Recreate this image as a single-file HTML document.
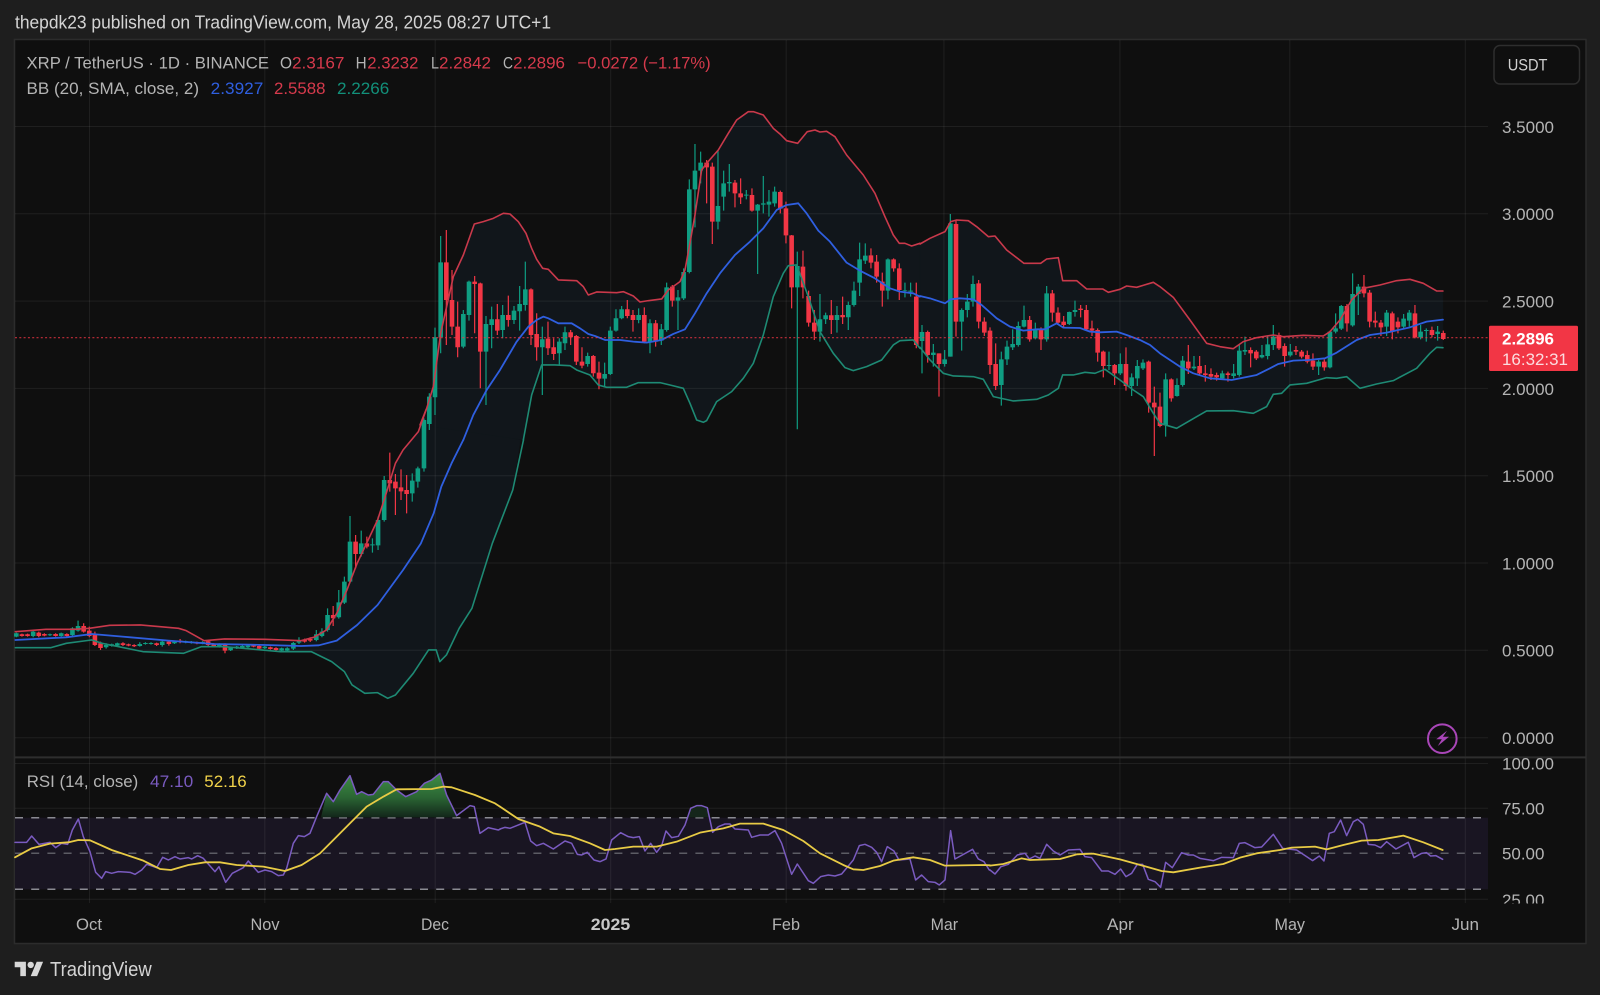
<!DOCTYPE html>
<html lang="en"><head><meta charset="utf-8"><title>XRP / TetherUS chart</title>
<style>
html,body{margin:0;padding:0;background:#1e1e1e;width:1600px;height:995px;overflow:hidden}
svg{display:block;filter:blur(.3px)}
text{font-family:"Liberation Sans",sans-serif;font-size:17px}
.w path,.b path,.ln polyline{vector-effect:non-scaling-stroke;fill:none}
.ln polyline{stroke-linejoin:round;stroke-linecap:round}
.w path{stroke-width:1.2}
.b path{stroke-width:4.6}
.gc{stroke:#0f9d82}.rc{stroke:#f23645}
.ax{fill:#b4b4b4}
.u{stroke:#c9394b;stroke-width:1.6}.m{stroke:#2f5fe0;stroke-width:1.8}.d{stroke:#1e8a74;stroke-width:1.6}
.p{stroke:#7a5bc0;stroke-width:1.5}.y{stroke:#e8cb45;stroke-width:1.8}
.f{fill:#11161b;stroke:#11161b;stroke-width:1}
</style></head><body>
<svg width="1600" height="995" viewBox="0 0 1600 995" xmlns="http://www.w3.org/2000/svg">
<defs>
<linearGradient id="ob" gradientUnits="userSpaceOnUse" x1="0" y1="25" x2="0" y2="157"><stop offset="0" stop-color="#3f8f45"/><stop offset=".55" stop-color="#2a6533"/><stop offset="1" stop-color="#12261a"/></linearGradient>
<clipPath id="rc"><rect x="1488" y="758" width="98" height="145.5"/></clipPath>
</defs>
<rect width="1600" height="995" fill="#1e1e1e"/>
<rect x="14.5" y="39.5" width="1571.5" height="904" fill="#0f0f0f" stroke="#2c2c2c" stroke-width="1.5"/>

<!-- BB fill -->
<g>
<polygon class="f" transform="translate(0 400) scale(.5102 .3333)" points="30,695 90,688 145,688 175,685 215,676 275,675 350,685 365,692 400,722 440,717 520,718 590,722 615,712 640,690 660,640 680,570 700,490 740,360 755,290 775,190 790,150 820,95 835,30 1020,120 1005,270 965,430 925,625 900,685 875,765 862,785 855,750 840,750 810,820 775,885 760,895 740,878 715,880 690,855 675,815 650,785 610,755 550,755 440,740 395,740 360,760 280,755 200,730 180,720 170,722 130,730 100,743 30,743"/>
<polygon class="f" transform="translate(420 100) scale(.3333)" points="0,975 20,925 40,860 62,700 100,530 130,465 163,372 190,365 220,355 250,340 270,342 295,365 318,400 335,445 350,478 368,505 385,508 415,540 470,542 490,560 505,585 530,576 590,578 610,575 640,588 660,606 685,602 725,597 745,570 780,545 795,510 808,440 825,345 845,210 860,190 895,150 925,100 950,60 985,35 1000,35 1030,45 1060,85 1080,102 1100,122 1133,130 1162,95 1185,90 1200,96 1220,94 1245,110 1280,165 1330,225 1365,280 1395,350 1420,405 1438,430 1455,430 1475,438 1500,430 1500,745 1480,720 1440,722 1420,735 1385,780 1340,800 1300,812 1275,803 1240,760 1200,695 1165,590 1130,495 1105,497 1090,520 1060,590 1030,705 1000,790 970,835 935,875 890,905 860,962 850,967 830,960 810,910 790,865 750,855 720,848 655,848 620,862 560,862 535,855 510,825 470,810 450,797 405,795 365,795 335,885 310,1020"/>
<polygon class="f" transform="translate(920 210) scale(.3333)" points="0,102 30,85 75,65 92,35 110,30 145,32 170,50 205,80 225,78 260,120 312,160 362,160 380,147 415,143 428,212 470,212 500,237 548,237 565,247 600,238 620,228 650,232 700,217 720,230 760,262 810,330 860,400 900,410 940,416 970,395 1010,383 1040,378 1060,375 1090,380 1150,376 1210,378 1230,365 1260,330 1295,270 1330,235 1380,225 1430,212 1470,208 1510,220 1550,243 1569,243 1569,413 1550,412 1530,430 1490,475 1420,512 1370,522 1320,535 1280,500 1250,505 1220,503 1160,520 1110,525 1085,550 1060,553 1040,590 1000,610 940,602 860,603 830,620 770,655 720,640 700,610 670,560 640,540 600,510 555,478 525,490 495,487 460,495 428,495 415,535 385,555 350,568 280,573 220,560 190,508 160,500 100,498 70,490 30,450 0,412"/>
</g>

<!-- RSI band -->
<rect x="15" y="817.7" width="1473" height="71.6" fill="#191522"/>

<!-- grid -->
<g stroke="#ffffff" stroke-opacity=".07" stroke-width="1">
<path d="M15 126.5H1488M15 213.8H1488M15 301.1H1488M15 388.4H1488M15 475.7H1488M15 563H1488M15 650.3H1488M15 737.7H1488M15 763.5H1488M15 808.3H1488M15 899.3H1488"/>
<path d="M89.5 40V903M264.8 40V903M435.2 40V903M610.7 40V903M786.2 40V903M943.9 40V903M1119.9 40V903M1289.8 40V903M1465.3 40V903"/>
</g>

<!-- candles Sep-Dec -->
<g transform="translate(0 400) scale(.5102 .3333)">
<g class="w">
<path class="gc" d="M32 698V712M65 692V712M98 701V708M120 698V710M142 682V710M153 662V695M208 730V746M219 731V740M230 728V739M274 727V740M285 727V734M296 727V734M318 722V740M342 723V732M364 722V730M375 723V731M397 724V733M430 730V743M452 740V753M464 738V747M475 736V745M486 735V744M519 738V747M552 743V754M563 742V754M575 726V750M586 712V732M620 690V724M631 685V712M642 625V695M664 570V656M675 530V612M686 348V550M708 392V470M730 415V458M741 350V450M753 228V365M808 220V305M819 200V263M831 55V215"/>
<path class="rc" d="M43 701V710M54 701V710M76 695V712M87 700V709M109 700V710M131 700V710M164 670V698M175 680V712M186 695V738M197 725V750M241 727V738M252 731V739M263 733V741M307 728V738M331 722V737M353 717V730M386 725V733M408 720V740M419 730V742M441 730V760M497 734V742M508 735V750M530 740V749M541 742V752M597 716V728M608 712V726M653 618V678M697 405V505M719 410V445M764 158V275M775 222V345M786 208V300M797 225V340"/>
</g>
<g class="b">
<path class="gc" d="M32 700V710M65 695V708M98 703V706M120 700V708M142 685V705M153 678V692M208 735V742M219 733V738M230 730V737M274 732V738M285 729V732M296 729V732M318 725V735M342 725V730M364 724V728M375 725V729M397 726V731M430 733V740M452 742V751M464 740V745M475 738V743M486 737V742M519 740V745M552 745V752M563 745V752M575 729V746M586 722V728M620 703V720M631 695V708M642 645V690M664 607V652M675 545V608M686 425V545M708 430V462M730 433V436M741 360V436M753 240V360M808 242V280M819 205V245M831 60V205"/>
<path class="rc" d="M43 703V708M54 703V708M76 698V708M87 702V707M109 702V708M131 702V708M164 678V695M175 692V708M186 705V735M197 730V744M241 730V735M252 733V737M263 735V739M307 730V735M331 725V732M353 722V726M386 727V731M408 724V735M419 733V738M441 735V752M497 736V740M508 738V746M530 742V747M541 744V750M597 720V725M608 717V722M653 645V655M697 425V462M719 430V440M764 240V250M775 245V265M786 262V274M797 270V282"/>
</g>
</g>

<!-- candles Dec-Feb -->
<g transform="translate(420 100) scale(.3333)">
<g class="w">
<path class="gc" d="M28 880V990M45 683V945M62 408V760M130 630V745M147 542V662M198 648V915M215 620V745M248 615V715M282 618V672M299 558V692M316 485V632M367 680V885M418 715V795M435 680V750M503 758V800M554 788V860M571 680V825M588 628V695M605 618V658M656 625V670M690 658V760M724 672V735M740 548V695M774 570V690M791 505V600M808 238V520M825 132V382M842 155V250M894 152V388M911 212V332M928 192V275M979 270V298M1013 312V522M1030 228V340M1047 270V350M1064 260V320M1132 455V988M1200 582V725M1217 638V672M1251 618V698M1285 605V690M1302 545V620M1319 428V588M1336 430V492M1404 475V598M1455 548V592M1472 548V590"/>
<path class="rc" d="M79 390V735M96 510V705M113 605V772M164 528V700M181 548V865M232 612V705M265 587V680M333 565V735M350 640V782M384 665V765M401 715V780M452 690V735M469 705V795M486 742V805M520 765V830M537 785V868M622 600V655M639 630V695M673 622V730M707 660V740M757 555V620M860 180V310M877 188V432M945 240V322M962 235V312M996 265V335M1081 272V340M1098 305V430M1115 405V625M1149 452V595M1166 572V680M1183 630V720M1234 600V702M1268 590V672M1353 445V505M1370 465V548M1387 518V620M1421 475V515M1438 490V600M1489 548V745"/>
</g>
<g class="b">
<path class="gc" d="M28 890V972M45 712V892M62 487V712M130 642V740M147 545V645M198 672V755M215 658V675M248 645V690M282 632V660M299 612V634M316 568V615M367 718V742M418 725V760M435 697V730M503 768V792M554 822V836M571 692V822M588 655V692M605 628V655M656 645V660M690 670V725M724 688V722M740 562V690M774 592V602M791 516V595M808 268V516M825 212V268M842 188V212M894 318V365M911 250V290M928 246V250M979 284V287M1013 314V332M1030 310V314M1047 305V314M1064 275V310M1132 498V562M1200 658V695M1217 646V658M1251 645V660M1285 615V652M1302 572V615M1319 478V548M1336 467V482M1404 478V572M1455 570V572M1472 572V575"/>
<path class="rc" d="M79 487V600M96 600V680M113 680V742M164 545V552M181 550V755M232 658V692M265 645V660M333 568V705M350 702V742M384 716V745M401 742V762M452 697V712M469 708V785M486 785V797M520 768V820M537 818V836M622 628V648M639 645V660M673 645V725M707 670V725M757 560V602M860 188V202M877 200V365M945 248V280M962 280V292M996 285V332M1081 276V326M1098 325V406M1115 406V562M1149 500V562M1166 588V668M1183 668V695M1234 646V660M1268 645V652M1353 466V488M1370 485V530M1387 545V572M1421 478V505M1438 505V570M1489 590V735"/>
</g>
</g>

<!-- candles Feb-May -->
<g transform="translate(920 210) scale(.3333)">
<g class="w">
<path class="gc" d="M6 345V490M40 402V470M74 420V470M91 12V440M125 295V422M142 252V322M159 197V290M244 425V587M261 392V465M278 358V420M295 335V410M312 287V352M346 338V388M380 228V395M448 305V345M465 272V320M567 425V480M601 430V495M635 490V558M652 450V528M669 448V480M737 490V680M771 505V560M788 438V530M822 438V480M907 482V510M941 462V505M958 405V500M975 380V435M1026 405V445M1043 378V448M1060 345V420M1111 402V440M1196 450V495M1230 362V475M1247 310V370M1264 285V360M1298 190V350M1315 222V315M1400 300V378M1451 312V355M1468 300V350M1502 345V388M1519 355V395M1553 348V392"/>
<path class="rc" d="M23 362V458M57 430V560M108 30V380M176 210V355M193 322V378M210 352V492M227 400V540M329 318V395M363 352V420M397 240V335M414 292V345M431 318V352M482 285V322M499 285V362M516 332V378M533 355V455M550 422V502M584 462V525M618 412V542M686 452V608M703 530V738M720 548V652M754 505V575M805 405V492M839 438V495M856 465V515M873 475V510M890 488V512M924 485V515M992 412V472M1009 420V450M1077 368V420M1094 400V470M1128 408V435M1145 420V445M1162 422V460M1179 430V480M1213 448V482M1281 282V365M1332 195V262M1349 240V352M1366 305V352M1383 330V378M1417 305V388M1434 322V370M1485 285V385M1536 350V382M1570 362V390"/>
</g>
<g class="b">
<path class="gc" d="M6 366V393M40 428V435M74 448V462M91 40V440M125 300V335M142 275V300M159 222V275M244 448V525M261 410V448M278 402V412M295 348V405M312 330V350M346 358V385M380 250V388M448 306V342M465 300V306M567 465V468M601 462V490M635 502V528M652 468V505M669 458V475M737 508V645M771 525V558M788 452V525M822 470V475M907 490V505M941 490V498M958 422V495M975 420V425M1026 435V442M1043 403V438M1060 380V405M1111 425V436M1196 455V470M1230 365V472M1247 355V365M1264 288V356M1298 252V346M1315 230V252M1400 308V350M1451 326V350M1468 308V332M1502 365V382M1519 360V363M1553 365V372"/>
<path class="rc" d="M23 366V435M57 430V462M108 42V335M176 220V335M193 335V368M210 362V465M227 462V528M329 330V388M363 358V388M397 250V308M414 308V338M431 335V345M482 296V300M499 300V358M516 355V362M533 360V428M550 425V468M584 465V490M618 462V528M686 455V578M703 578V592M720 590V648M754 508V565M805 455V475M839 468V490M856 490V495M873 492V500M890 495V502M924 490V495M992 420V430M1009 425V445M1077 375V415M1094 408V438M1128 420V425M1145 425V440M1162 435V455M1179 452V470M1213 455V472M1281 288V340M1332 230V250M1349 248V335M1366 332V338M1383 338V352M1417 310V365M1434 335V352M1485 310V382M1536 360V375M1570 369V387"/>
</g>
</g>

<!-- BB lines -->
<g class="ln" transform="translate(0 400) scale(.5102 .3333)">
<polyline class="u" points="30,695 90,688 145,688 175,685 215,676 275,675 350,685 365,692 400,722 440,717 520,718 590,722 615,712 640,690 660,640 680,570 700,490 740,360 755,290 775,190 790,150 820,95 835,30"/>
<polyline class="m" points="30,720 130,712 180,702 240,710 330,722 420,732 520,735 590,738 625,736 660,722 700,675 740,615 790,510 825,430 850,340 865,260 885,190 908,120"/>
<polyline class="d" points="30,743 100,743 130,730 170,722 180,720 200,730 280,755 360,760 395,740 440,740 550,755 610,755 650,785 675,815 690,855 715,880 740,878 760,895 775,885 810,820 840,750 855,750 862,785 875,765 900,685 925,625 965,430 1005,270 1026,120"/>
</g>
<g class="ln" transform="translate(420 100) scale(.3333)">
<polyline class="u" points="0,975 20,925 40,860 62,700 100,530 130,465 163,372 190,365 220,355 250,340 270,342 295,365 318,400 335,445 350,478 368,505 385,508 415,540 470,542 490,560 505,585 530,576 590,578 610,575 640,588 660,606 685,602 725,597 745,570 780,545 795,510 808,440 825,345 845,210 860,190 895,150 925,100 950,60 985,35 1000,35 1030,45 1060,85 1080,102 1100,122 1133,130 1162,95 1185,90 1200,96 1220,94 1245,110 1280,165 1330,225 1365,280 1395,350 1420,405 1438,430 1455,430 1475,438 1500,430"/>
<polyline class="m" points="130,1020 160,945 200,870 240,810 290,725 325,680 350,660 370,650 385,655 415,670 455,670 480,685 505,702 525,708 555,720 600,720 640,725 680,728 725,720 760,702 795,688 825,640 860,580 900,520 945,465 990,425 1030,385 1070,330 1100,315 1135,310 1160,340 1195,392 1230,425 1280,488 1320,512 1365,535 1410,565 1440,575 1480,580 1500,590"/>
<polyline class="d" points="310,1020 335,885 365,795 405,795 450,797 470,810 510,825 535,855 560,862 620,862 655,848 720,848 750,855 790,865 810,910 830,960 850,967 860,962 890,905 935,875 970,835 1000,790 1030,705 1060,590 1090,520 1105,497 1130,495 1165,590 1200,695 1240,760 1275,803 1300,812 1340,800 1385,780 1420,735 1440,722 1480,720 1500,745"/>
</g>
<g class="ln" transform="translate(920 210) scale(.3333)">
<polyline class="u" points="0,102 30,85 75,65 92,35 110,30 145,32 170,50 205,80 225,78 260,120 312,160 362,160 380,147 415,143 428,212 470,212 500,237 548,237 565,247 600,238 620,228 650,232 700,217 720,230 760,262 810,330 860,400 900,410 940,416 970,395 1010,383 1040,378 1060,375 1090,380 1150,376 1210,378 1230,365 1260,330 1295,270 1330,235 1380,225 1430,212 1470,208 1510,220 1550,243 1569,243"/>
<polyline class="m" points="0,258 30,265 75,280 92,268 120,265 160,268 185,285 230,325 270,350 310,362 350,358 375,358 410,340 430,353 480,354 510,365 540,367 590,365 620,375 660,390 690,405 720,430 780,470 820,490 870,505 935,510 1010,495 1050,475 1075,462 1120,452 1165,450 1215,445 1250,428 1310,390 1350,375 1400,368 1470,352 1520,335 1569,329"/>
<polyline class="d" points="0,412 30,450 70,490 100,498 160,500 190,508 220,560 280,573 350,568 385,555 415,535 428,495 460,495 495,487 525,490 555,478 600,510 640,540 670,560 700,610 720,640 770,655 830,620 860,603 940,602 1000,610 1040,590 1060,553 1085,550 1110,525 1160,520 1220,503 1250,505 1280,500 1320,535 1370,522 1420,512 1490,475 1530,430 1550,412 1569,413"/>
</g>

<!-- last price line -->
<path d="M15 337.7H1488" stroke="#f23645" stroke-opacity=".8" stroke-width="1.1" stroke-dasharray="2 2.3" fill="none"/>

<!-- separator -->
<rect x="15" y="756.4" width="1571" height="2" fill="#2e2e2e"/>

<!-- RSI dashes -->
<g fill="none" stroke-width="1.5" stroke-dasharray="8 8.2">
<path d="M15 817.7H1482M15 889.3H1482" stroke="#8a8a92"/>
<path d="M15 853.3H1482" stroke="#5c5c64"/>
</g>

<!-- overbought fill -->
<polygon fill="url(#ob)" transform="translate(15 765) scale(.3333)" points="918,157 935,85 955,110 975,75 1005,32 1025,88 1040,80 1060,90 1075,88 1105,50 1120,50 1145,75 1172,95 1205,80 1228,55 1250,45 1275,25 1295,90 1325,157"/>
<polygon fill="#15261b" transform="translate(500 765) scale(.3333)" points="566,157 572,130 590,122 605,122 622,128 628,157"/>

<!-- RSI lines -->
<g class="ln" transform="translate(15 765) scale(.3333)">
<polyline class="p" points="0,232 35,232 50,213 72,238 105,232 122,248 140,235 158,238 172,195 190,162 205,215 225,260 242,322 260,340 272,320 290,325 310,320 345,322 360,328 380,315 395,298 425,308 443,277 460,285 480,275 495,282 520,278 530,282 548,272 565,280 600,320 612,305 632,352 652,325 685,308 700,288 730,322 750,315 770,320 790,332 805,330 815,310 835,235 850,212 868,215 885,205 905,155 935,85 955,110 975,75 1005,32 1025,88 1040,80 1060,90 1075,88 1105,50 1120,50 1145,75 1172,95 1205,80 1228,55 1250,45 1275,25 1295,90 1325,152 1365,122 1378,125 1395,205 1420,188 1450,195 1455,193"/>
</g>
<g class="ln" transform="translate(500 765) scale(.3333)">
<polyline class="p" points="0,192 15,187 30,190 75,172 92,228 110,242 130,235 160,252 195,228 215,235 232,268 245,270 262,262 282,285 300,290 318,282 335,225 362,203 385,215 400,218 418,215 435,258 452,235 470,262 485,242 498,198 515,218 535,214 555,180 572,130 590,122 605,122 622,128 638,202 655,185 675,177 690,177 705,192 745,195 755,217 780,210 805,210 825,197 845,235 875,328 892,297 925,347 940,355 962,335 985,330 1005,333 1025,327 1060,285 1078,242 1095,238 1115,247 1130,262 1145,290 1162,245 1182,258 1197,285 1230,282 1247,345 1265,330 1285,350 1305,352 1318,360 1335,345 1352,197 1365,282 1418,253 1435,282 1452,290 1468,315 1470,315"/>
</g>
<g class="ln" transform="translate(990 765) scale(.3333)">
<polyline class="p" points="0,315 15,327 33,305 55,298 82,270 105,265 118,282 135,273 150,280 170,238 190,258 210,270 235,255 270,253 285,275 305,278 335,318 355,318 375,328 392,312 408,335 425,325 442,298 458,298 475,343 495,350 512,367 527,292 547,308 575,263 595,270 610,270 630,280 670,287 695,277 730,278 748,235 765,233 795,248 815,246 850,208 878,250 920,255 968,287 988,273 1002,288 1018,205 1033,200 1052,165 1070,212 1090,170 1103,163 1120,178 1135,238 1155,240 1172,248 1190,230 1218,252 1255,232 1272,278 1295,265 1310,263 1322,273 1338,272 1358,283"/>
</g>
<g class="ln" transform="translate(15 765) scale(.3333)">
<polyline class="y" points="0,277 50,250 105,236 160,232 190,225 225,226 290,255 385,287 435,312 468,315 520,300 570,292 615,292 665,300 745,305 810,318 860,300 915,265 960,220 1010,170 1055,125 1105,95 1145,73 1250,72 1285,65 1310,67 1380,90 1440,115 1455,125"/>
</g>
<g class="ln" transform="translate(500 765) scale(.3333)">
<polyline class="y" points="0,125 55,162 120,185 160,205 210,213 270,235 315,255 345,252 400,245 470,245 530,230 600,203 670,190 720,176 790,176 850,195 910,228 960,265 1030,300 1060,313 1090,315 1140,303 1180,287 1240,277 1290,285 1335,302 1450,300 1470,301"/>
</g>
<g class="ln" transform="translate(990 765) scale(.3333)">
<polyline class="y" points="0,302 40,297 95,280 120,285 210,282 260,268 310,266 390,283 440,297 515,318 550,322 630,308 700,297 750,278 800,265 870,255 905,248 975,245 1010,253 1060,240 1115,227 1165,225 1240,212 1300,232 1358,255"/>
</g>

<!-- title -->
<text x="15" y="28.3" style="font-size:18px" fill="#d4d4d4" textLength="536" lengthAdjust="spacingAndGlyphs">thepdk23 published on TradingView.com, May 28, 2025 08:27 UTC+1</text>

<!-- legend -->
<text x="26.5" y="68.7" fill="#b4b4b4" textLength="242.5" lengthAdjust="spacingAndGlyphs">XRP / TetherUS · 1D · BINANCE</text>
<text x="280" y="68.7" fill="#b4b4b4" textLength="12" lengthAdjust="spacingAndGlyphs">O</text>
<text x="292" y="68.7" fill="#d63a4c" textLength="52.4" lengthAdjust="spacingAndGlyphs">2.3167</text>
<text x="355.6" y="68.7" fill="#b4b4b4" textLength="11" lengthAdjust="spacingAndGlyphs">H</text>
<text x="367.3" y="68.7" fill="#d63a4c" textLength="51.1" lengthAdjust="spacingAndGlyphs">2.3232</text>
<text x="431" y="68.7" fill="#b4b4b4" textLength="8" lengthAdjust="spacingAndGlyphs">L</text>
<text x="439" y="68.7" fill="#d63a4c" textLength="52" lengthAdjust="spacingAndGlyphs">2.2842</text>
<text x="503" y="68.7" fill="#b4b4b4" textLength="10" lengthAdjust="spacingAndGlyphs">C</text>
<text x="513" y="68.7" fill="#d63a4c" textLength="52" lengthAdjust="spacingAndGlyphs">2.2896</text>
<text x="577.5" y="68.7" fill="#d63a4c" textLength="133.2" lengthAdjust="spacingAndGlyphs">−0.0272 (−1.17%)</text>
<text x="26.5" y="93.9" fill="#b4b4b4" textLength="172.5" lengthAdjust="spacingAndGlyphs">BB (20, SMA, close, 2)</text>
<text x="210.7" y="93.9" fill="#2f5fe0" textLength="52.6" lengthAdjust="spacingAndGlyphs">2.3927</text>
<text x="274" y="93.9" fill="#d63a4c" textLength="51.5" lengthAdjust="spacingAndGlyphs">2.5588</text>
<text x="337" y="93.9" fill="#12907a" textLength="52.3" lengthAdjust="spacingAndGlyphs">2.2266</text>

<text x="26.7" y="787" fill="#b4b4b4" textLength="111.6" lengthAdjust="spacingAndGlyphs">RSI (14, close)</text>
<text x="150" y="787" fill="#7a5bc0" textLength="43.3" lengthAdjust="spacingAndGlyphs">47.10</text>
<text x="204.3" y="787" fill="#f0d24a" textLength="42.4" lengthAdjust="spacingAndGlyphs">52.16</text>

<!-- USDT -->
<rect x="1494" y="45.5" width="85.5" height="38.5" rx="6" fill="#0f0f0f" stroke="#2e2e2e" stroke-width="1.5"/>
<text x="1507.7" y="70.7" fill="#d0d0d0" textLength="39.8" lengthAdjust="spacingAndGlyphs">USDT</text>

<!-- price axis -->
<g class="ax">
<text x="1502" y="132.8" textLength="52" lengthAdjust="spacingAndGlyphs">3.5000</text>
<text x="1502" y="220" textLength="52" lengthAdjust="spacingAndGlyphs">3.0000</text>
<text x="1502" y="307.5" textLength="52" lengthAdjust="spacingAndGlyphs">2.5000</text>
<text x="1502" y="394.8" textLength="52" lengthAdjust="spacingAndGlyphs">2.0000</text>
<text x="1502" y="482" textLength="52" lengthAdjust="spacingAndGlyphs">1.5000</text>
<text x="1502" y="569.3" textLength="52" lengthAdjust="spacingAndGlyphs">1.0000</text>
<text x="1502" y="656.6" textLength="52" lengthAdjust="spacingAndGlyphs">0.5000</text>
<text x="1502" y="744" textLength="52" lengthAdjust="spacingAndGlyphs">0.0000</text>
<g clip-path="url(#rc)">
<text x="1502" y="769.5" textLength="52" lengthAdjust="spacingAndGlyphs">100.00</text>
<text x="1502" y="814.5" textLength="42.4" lengthAdjust="spacingAndGlyphs">75.00</text>
<text x="1502" y="859.5" textLength="42.4" lengthAdjust="spacingAndGlyphs">50.00</text>
<text x="1502" y="906" textLength="42.4" lengthAdjust="spacingAndGlyphs">25.00</text>
</g>
</g>

<!-- price tag -->
<rect x="1489" y="325.7" width="89" height="45.3" rx="1.5" fill="#f23645"/>
<text x="1502" y="344.3" fill="#fff" style="font-weight:700" textLength="52" lengthAdjust="spacingAndGlyphs">2.2896</text>
<text x="1502" y="365" fill="#fbdcdf" textLength="66" lengthAdjust="spacingAndGlyphs">16:32:31</text>

<!-- time axis -->
<g class="ax">
<text x="76" y="930" textLength="26" lengthAdjust="spacingAndGlyphs">Oct</text>
<text x="250.5" y="930" textLength="29" lengthAdjust="spacingAndGlyphs">Nov</text>
<text x="421" y="930" textLength="28" lengthAdjust="spacingAndGlyphs">Dec</text>
<text x="590.8" y="930" fill="#c8c8c8" style="font-weight:700" textLength="39.4" lengthAdjust="spacingAndGlyphs">2025</text>
<text x="772" y="930" textLength="28" lengthAdjust="spacingAndGlyphs">Feb</text>
<text x="930.6" y="930" textLength="27.5" lengthAdjust="spacingAndGlyphs">Mar</text>
<text x="1107" y="930" textLength="26.7" lengthAdjust="spacingAndGlyphs">Apr</text>
<text x="1274.5" y="930" textLength="30.5" lengthAdjust="spacingAndGlyphs">May</text>
<text x="1451.5" y="930" textLength="27.5" lengthAdjust="spacingAndGlyphs">Jun</text>
</g>

<!-- bolt icon -->
<circle cx="1442.3" cy="738.7" r="14.3" fill="none" stroke="#a946b8" stroke-width="2"/>
<path d="M1447 730.7L1436.2 739.3H1441.8L1437.8 746L1449 736.7H1442.9Z" fill="#a946b8"/>

<!-- logo -->
<g transform="translate(14.7 958.5) scale(.8)" fill="#d8d8d8">
<path d="M14 22H7V11H0V4h14v18zM28 22h-8l7.5-18h8L28 22z"/><circle cx="20" cy="8" r="4"/>
</g>
<text x="50" y="976" style="font-size:20px" fill="#d4d4d4" textLength="101.7" lengthAdjust="spacingAndGlyphs">TradingView</text>
</svg>
</body></html>
